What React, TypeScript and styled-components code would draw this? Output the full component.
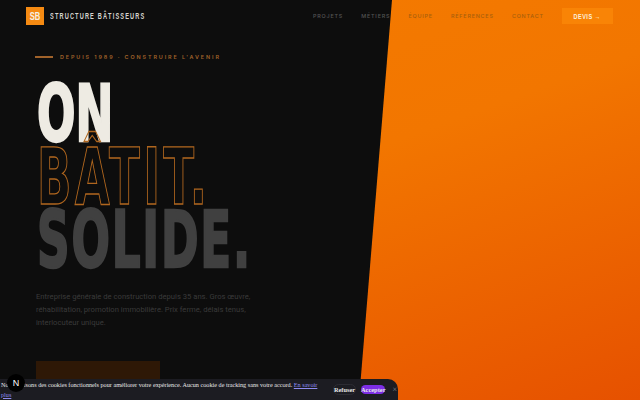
import React from 'react';
import styled, { createGlobalStyle } from 'styled-components';

const GlobalStyle = createGlobalStyle`
  html, body {
    margin: 0;
    padding: 0;
    width: 640px;
    height: 400px;
    overflow: hidden;
    background: #0d0d0d;
  }
`;

const Page = styled.div`
  position: relative;
  width: 640px;
  height: 400px;
  overflow: hidden;
  background: #0d0d0d;
  font-family: 'Inter', 'Liberation Sans', sans-serif;
`;

const OrangePanel = styled.div`
  position: absolute;
  inset: 0;
  background: linear-gradient(160deg, #f57c00 0%, #f27600 45%, #e65100 100%);
  clip-path: polygon(392px 0, 640px 0, 640px 400px, 359px 400px);
`;

const Nav = styled.nav`
  position: relative;
  display: flex;
  align-items: center;
  justify-content: space-between;
  height: 32px;
  padding: 0 27px 0 26px;
`;

const Brand = styled.div`
  display: flex;
  align-items: center;
  gap: 6px;
`;

const LogoMark = styled.div`
  display: flex;
  align-items: center;
  justify-content: center;
  width: 18px;
  height: 18px;
  background: #f58a12;
  color: #f5efe4;
  font-family: 'Liberation Sans', sans-serif;
  font-weight: 700;
  font-size: 10px;
`;

const LogoLetters = styled.span`
  transform: scaleX(0.76);
`;

const BrandName = styled.span`
  font-family: 'Liberation Sans', sans-serif;
  font-weight: 700;
  font-size: 8.5px;
  letter-spacing: 1.75px;
  color: #d6d4ce;
  white-space: nowrap;
  transform-origin: left center;
  transform: scaleX(0.66);
`;

const NavLinks = styled.div`
  display: flex;
  align-items: center;
  gap: 18.2px;
`;

const NavLink = styled.a<{ $onOrange?: boolean }>`
  font-size: 5.4px;
  font-weight: 500;
  letter-spacing: 0.8px;
  color: ${(p) => (p.$onOrange ? '#a85f0c' : '#555555')};
`;

const QuoteButton = styled.a`
  display: flex;
  align-items: center;
  justify-content: center;
  width: 51px;
  height: 16px;
  background: #f98406;
  color: #fbeedd;
  font-family: 'Liberation Sans', sans-serif;
  font-weight: 700;
  font-size: 7px;
  letter-spacing: 0.6px;
`;

const QuoteLabel = styled.span`
  transform: scaleX(0.8);
`;

const Hero = styled.section`
  position: relative;
  display: flex;
  flex-direction: column;
  align-items: flex-start;
  padding: 22px 0 0 35px;
`;

const Eyebrow = styled.div`
  display: flex;
  align-items: center;
  gap: 7px;
  height: 6px;
  font-size: 5.4px;
  font-weight: 600;
  letter-spacing: 1.9px;
  color: #a0622a;
  white-space: nowrap;
`;

const EyebrowRule = styled.span`
  width: 18px;
  height: 1.5px;
  background: #a0622a;
`;

const Title = styled.h1`
  margin: 23px 0 0 2px;
  font-family: 'DejaVu Sans Condensed', 'DejaVu Sans', sans-serif;
  font-stretch: condensed;
  font-weight: 700;
  font-size: 78px;
  line-height: 63px;
`;

const TitleLine = styled.span<{ $kind: 'solid' | 'outline' | 'muted'; $spacing: number }>`
  display: block;
  white-space: nowrap;
  transform-origin: left center;
  transform: scaleX(0.645);
  letter-spacing: ${(p) => p.$spacing}px;
  color: ${(p) => (p.$kind === 'solid' ? '#eeebe3' : p.$kind === 'muted' ? '#404040' : 'transparent')};
  -webkit-text-stroke: ${(p) =>
    p.$kind === 'outline' ? '1.3px #b0661e' : p.$kind === 'solid' ? '2.4px #eeebe3' : '2.4px #404040'};
`;

const Lead = styled.p`
  margin: 18px 0 0 1px;
  width: 218px;
  font-family: 'Roboto', 'Liberation Sans', sans-serif;
  font-size: 7.65px;
  line-height: 13px;
  color: #3a3a3a;
`;

const HeroCta = styled.div`
  width: 124px;
  height: 30px;
  margin: 32px 0 0 1px;
  background: #2e1806;
`;

const CookieBar = styled.div`
  position: absolute;
  left: 0;
  bottom: 0;
  width: 398px;
  height: 21px;
  display: flex;
  align-items: center;
  gap: 5px;
  padding-left: 1px;
  box-sizing: border-box;
  background: #1c1c22;
  border-radius: 0 10px 0 0;
  font-family: 'Liberation Serif', serif;
  color: #e8e8e8;
`;

const CookieText = styled.p`
  flex: 1;
  margin: 0;
  font-size: 6.2px;
  line-height: 10px;
`;

const CookieLink = styled.a`
  color: #8f8cf0;
  text-decoration: underline;
`;

const RefuseButton = styled.span`
  padding: 1px 0;
  border-radius: 7px;
  border: 1px solid #2c2c33;
  font-size: 6.3px;
  font-weight: 700;
`;

const AcceptButton = styled.span`
  padding: 1px 0;
  border-radius: 6px;
  background: #7c2ee6;
  font-size: 6.4px;
  font-weight: 700;
`;

const CloseButton = styled.span`
  margin: 0 1px 0 2px;
  font-size: 8px;
  color: #8a8a90;
`;

const DevBadge = styled.div`
  position: absolute;
  left: 7px;
  bottom: 8px;
  display: flex;
  align-items: center;
  justify-content: center;
  width: 18px;
  height: 18px;
  border-radius: 50%;
  background: #000;
  color: #fff;
  font-family: 'Liberation Sans', sans-serif;
  font-size: 9px;
`;

const App: React.FC = () => (
  <Page>
    <GlobalStyle />
    <OrangePanel />
    <Nav>
      <Brand>
        <LogoMark>
          <LogoLetters>SB</LogoLetters>
        </LogoMark>
        <BrandName>STRUCTURE BÂTISSEURS</BrandName>
      </Brand>
      <NavLinks>
        <NavLink>PROJETS</NavLink>
        <NavLink>MÉTIERS</NavLink>
        <NavLink $onOrange>ÉQUIPE</NavLink>
        <NavLink $onOrange>RÉFÉRENCES</NavLink>
        <NavLink $onOrange>CONTACT</NavLink>
        <QuoteButton>
          <QuoteLabel>DEVIS →</QuoteLabel>
        </QuoteButton>
      </NavLinks>
    </Nav>
    <Hero>
      <Eyebrow>
        <EyebrowRule />
        DEPUIS 1989 · CONSTRUIRE L'AVENIR
      </Eyebrow>
      <Title>
        <TitleLine $kind="solid" $spacing={0}>
          ON
        </TitleLine>
        <TitleLine $kind="outline" $spacing={5}>
          BÂTIT.
        </TitleLine>
        <TitleLine $kind="muted" $spacing={2.8}>
          SOLIDE.
        </TitleLine>
      </Title>
      <Lead>
        Entreprise générale de construction depuis 35 ans. Gros œuvre, réhabilitation, promotion immobilière. Prix
        ferme, délais tenus, interlocuteur unique.
      </Lead>
      <HeroCta />
    </Hero>
    <CookieBar>
      <CookieText>
        Nous utilisons des cookies fonctionnels pour améliorer votre expérience. Aucun cookie de tracking sans votre
        accord. <CookieLink>En savoir plus</CookieLink>
      </CookieText>
      <RefuseButton>Refuser</RefuseButton>
      <AcceptButton>Accepter</AcceptButton>
      <CloseButton>×</CloseButton>
    </CookieBar>
    <DevBadge>N</DevBadge>
  </Page>
);

export default App;
